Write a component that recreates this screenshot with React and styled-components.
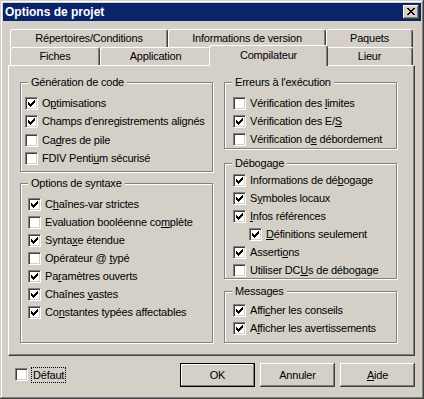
import React from 'react';
import styled, { createGlobalStyle, css } from 'styled-components';

const FACE = '#d4d0c8';
const SHADOW = '#808080';
const DARK = '#404040';

const GlobalStyle = createGlobalStyle`
  html, body {
    margin: 0;
    padding: 0;
    background: ${FACE};
  }
  body {
    font-family: 'Liberation Sans', Arial, sans-serif;
    font-size: 11px;
    letter-spacing: -0.2px;
    color: #000;
  }
`;

const Window = styled.div`
  width: 424px;
  height: 399px;
  box-sizing: border-box;
  padding: 3px;
  background: ${FACE};
  box-shadow: inset -1px -1px ${DARK}, inset 1px 1px ${FACE},
    inset -2px -2px ${SHADOW}, inset 2px 2px #fff;
  display: flex;
  flex-direction: column;
`;

const TitleBar = styled.div`
  height: 18px;
  flex: none;
  background: #0a246a;
  display: flex;
  align-items: center;
  justify-content: space-between;
  padding: 0 2px;
`;

const Title = styled.span`
  color: #fff;
  font-weight: bold;
  font-size: 12px;
  letter-spacing: 0;
`;

const CloseButton = styled.div`
  width: 16px;
  height: 14px;
  box-sizing: border-box;
  background: ${FACE};
  box-shadow: inset -1px -1px ${DARK}, inset 1px 1px #fff,
    inset -2px -2px ${SHADOW}, inset 2px 2px ${FACE};
  display: flex;
  align-items: center;
  justify-content: center;
  padding: 0 1px 1px 0;
`;

const Body = styled.div`
  flex: 1;
  padding: 8px 6px 0 5px;
  display: flex;
  flex-direction: column;
`;

const TabStrip = styled.div`
  margin-left: 2px;
  display: flex;
  flex-direction: column;
`;

const TabRow = styled.div`
  display: flex;
  height: 18px;
  align-items: flex-start;
`;

const Tab = styled.div`
  box-sizing: border-box;
  flex: none;
  width: ${(p) => p.$w}px;
  height: 18px;
  background: ${FACE};
  border: 1px solid #fff;
  border-bottom: 0;
  border-right-color: ${DARK};
  border-radius: 3px 3px 0 0;
  box-shadow: inset -1px 0 ${SHADOW};
  display: flex;
  align-items: center;
  justify-content: center;
  padding-bottom: 1px;
  white-space: nowrap;

  ${(p) =>
    p.$active &&
    css`
      position: relative;
      z-index: 1;
      width: ${p.$w + 4}px;
      height: 21px;
      margin: -2px -2px -1px;
      padding-bottom: 2px;
    `}
`;

const Panel = styled.div`
  box-sizing: border-box;
  height: 291px;
  flex: none;
  border: 1px solid;
  border-color: #fff ${DARK} ${DARK} #fff;
  box-shadow: inset -1px -1px ${SHADOW};
  padding: 16px 0 0 11px;
  display: flex;
  gap: 11px;
`;

const Column = styled.div`
  display: flex;
  flex-direction: column;
`;

const Group = styled.div`
  position: relative;
  box-sizing: border-box;
  width: ${(p) => p.$w}px;
  height: ${(p) => p.$h}px;
  margin-top: ${(p) => p.$mt || 0}px;
  border: 1px solid ${SHADOW};
  box-shadow: inset 1px 1px #fff, 1px 1px #fff;
  padding: ${(p) => p.$pt}px 0 0 ${(p) => p.$pl}px;
  display: flex;
  flex-direction: column;
  gap: ${(p) => p.$gap || 5}px;
`;

const Legend = styled.span`
  position: absolute;
  top: -7px;
  left: 7px;
  padding: 0 3px;
  line-height: 13px;
  background: ${FACE};
  white-space: nowrap;
`;

const Row = styled.div`
  display: flex;
  align-items: center;
  gap: 4px;
  height: 13px;
  margin-left: ${(p) => p.$indent || 0}px;
`;

const Box = styled.span`
  box-sizing: border-box;
  flex: none;
  width: 13px;
  height: 13px;
  background: #fff;
  border: 1px solid;
  border-color: ${SHADOW} #fff #fff ${SHADOW};
  box-shadow: inset 1px 1px ${DARK}, inset -1px -1px ${FACE};
  display: flex;
  align-items: center;
  justify-content: center;
`;

const Text = styled.span`
  line-height: 13px;
  white-space: nowrap;
  ${(p) =>
    p.$focus &&
    css`
      outline: 1px dotted #000;
      outline-offset: 0;
      padding: 0 1px;
      line-height: 14px;
    `}
`;

const Footer = styled.div`
  display: flex;
  align-items: flex-start;
  margin-top: 7px;
`;

const DefaultRow = styled(Row)`
  margin: 5px 0 0 7px;
`;

const Buttons = styled.div`
  margin-left: auto;
  display: flex;
  gap: 5px;
`;

const Button = styled.div`
  box-sizing: border-box;
  width: 75px;
  height: 24px;
  background: ${FACE};
  box-shadow: inset -1px -1px ${DARK}, inset 1px 1px #fff,
    inset -2px -2px ${SHADOW}, inset 2px 2px ${FACE};
  display: flex;
  align-items: center;
  justify-content: center;

  ${(p) =>
    p.$default &&
    css`
      border: 1px solid #000;
      box-shadow: inset -1px -1px ${SHADOW}, inset 1px 1px #fff;
    `}
`;

const CloseGlyph = () => (
  <svg width="8" height="7" viewBox="0 0 8 7" shapeRendering="crispEdges">
    <path
      fill="#000"
      d="M0 0h2v1h-2zM6 0h2v1h-2zM1 1h2v1h-2zM5 1h2v1h-2zM2 2h4v1h-4zM3 3h2v1h-2zM2 4h4v1h-4zM1 5h2v1h-2zM5 5h2v1h-2zM0 6h2v1h-2zM6 6h2v1h-2z"
    />
  </svg>
);

const CheckGlyph = () => (
  <svg width="7" height="7" viewBox="0 0 7 7" shapeRendering="crispEdges">
    <path
      fill="#000"
      d="M6 0h1v1h-1zM5 1h2v1h-2zM0 2h1v1h-1zM4 2h3v1h-3zM0 3h2v1h-2zM3 3h3v1h-3zM0 4h5v1h-5zM1 5h3v1h-3zM2 6h1v1h-1z"
    />
  </svg>
);

// label given as [before, mnemonic, after]
const Label = ({ parts }) => {
  const [a, k, b] = parts;
  return (
    <>
      {a}
      {k ? <u>{k}</u> : null}
      {b}
    </>
  );
};

const Check = ({ item }) => (
  <Row $indent={item.indent}>
    <Box>{item.on ? <CheckGlyph /> : null}</Box>
    <Text>
      <Label parts={item.label} />
    </Text>
  </Row>
);

const groups = {
  generation: {
    title: 'Génération de code',
    items: [
      { label: ['O', 'p', 'timisations'], on: true },
      { label: ["Champs d'enregistrements alignés"], on: true },
      { label: ['Ca', 'd', 'res de pile'], on: false },
      { label: ['FDIV Penti', 'u', 'm sécurisé'], on: false },
    ],
  },
  syntaxe: {
    title: 'Options de syntaxe',
    items: [
      { label: ['C', 'h', 'aînes-var strictes'], on: true },
      { label: ['Evaluation booléenne co', 'm', 'plète'], on: false },
      { label: ['Synta', 'x', 'e étendue'], on: true },
      { label: ['Opérateur @ ', 't', 'ypé'], on: false },
      { label: ['Pa', 'r', 'amètres ouverts'], on: true },
      { label: ['Chaînes ', 'v', 'astes'], on: true },
      { label: ['Co', 'n', 'stantes typées affectables'], on: true },
    ],
  },
  erreurs: {
    title: "Erreurs à l'exécution",
    items: [
      { label: ['Vérification des ', 'l', 'imites'], on: false },
      { label: ['Vérification des E/', 'S', ''], on: true },
      { label: ['Vérification d', 'e', ' débordement'], on: false },
    ],
  },
  debogage: {
    title: 'Débogage',
    items: [
      { label: ['Informations de dé', 'b', 'ogage'], on: true },
      { label: ['S', 'y', 'mboles locaux'], on: true },
      { label: ['', 'I', 'nfos références'], on: true },
      { label: ['', 'D', 'éfinitions seulement'], on: true, indent: 16 },
      { label: ['Asserti', 'o', 'ns'], on: true },
      { label: ['Utiliser DC', 'U', 's de débogage'], on: false },
    ],
  },
  messages: {
    title: 'Messages',
    items: [
      { label: ['Affi', 'c', 'her les conseils'], on: true },
      { label: ['A', 'f', 'ficher les avertissements'], on: true },
    ],
  },
};

const GroupBox = ({ data, ...rest }) => (
  <Group {...rest}>
    <Legend>{data.title}</Legend>
    {data.items.map((item, i) => (
      <Check key={i} item={item} />
    ))}
  </Group>
);

const backTabs = [
  { label: 'Répertoires/Conditions', w: 158 },
  { label: 'Informations de version', w: 158 },
  { label: 'Paquets', w: 87 },
];

const frontTabs = [
  { label: 'Fiches', w: 90 },
  { label: 'Application', w: 111 },
  { label: 'Compilateur', w: 115, active: true },
  { label: 'Lieur', w: 87 },
];

export default function App() {
  return (
    <>
      <GlobalStyle />
      <Window>
        <TitleBar>
          <Title>Options de projet</Title>
          <CloseButton>
            <CloseGlyph />
          </CloseButton>
        </TitleBar>
        <Body>
          <TabStrip>
            <TabRow>
              {backTabs.map((t) => (
                <Tab key={t.label} $w={t.w}>
                  {t.label}
                </Tab>
              ))}
            </TabRow>
            <TabRow>
              {frontTabs.map((t) => (
                <Tab key={t.label} $w={t.w} $active={t.active}>
                  {t.label}
                </Tab>
              ))}
            </TabRow>
          </TabStrip>
          <Panel>
            <Column>
              <GroupBox data={groups.generation} $w={193} $h={90} $pt={14} $pl={4} $gap={5.3} />
              <GroupBox data={groups.syntaxe} $w={193} $h={160} $mt={11} $pt={14} $pl={7} />
            </Column>
            <Column>
              <GroupBox data={groups.erreurs} $w={173} $h={67} $pt={14} $pl={8} />
              <GroupBox data={groups.debogage} $w={173} $h={116} $mt={14} $pt={10} $pl={8} />
              <GroupBox data={groups.messages} $w={173} $h={52} $mt={12} $pt={12} $pl={8} />
            </Column>
          </Panel>
          <Footer>
            <DefaultRow>
              <Box />
              <Text $focus>Défaut</Text>
            </DefaultRow>
            <Buttons>
              <Button $default>OK</Button>
              <Button>Annuler</Button>
              <Button>
                <span>
                  <u>A</u>ide
                </span>
              </Button>
            </Buttons>
          </Footer>
        </Body>
      </Window>
    </>
  );
}
